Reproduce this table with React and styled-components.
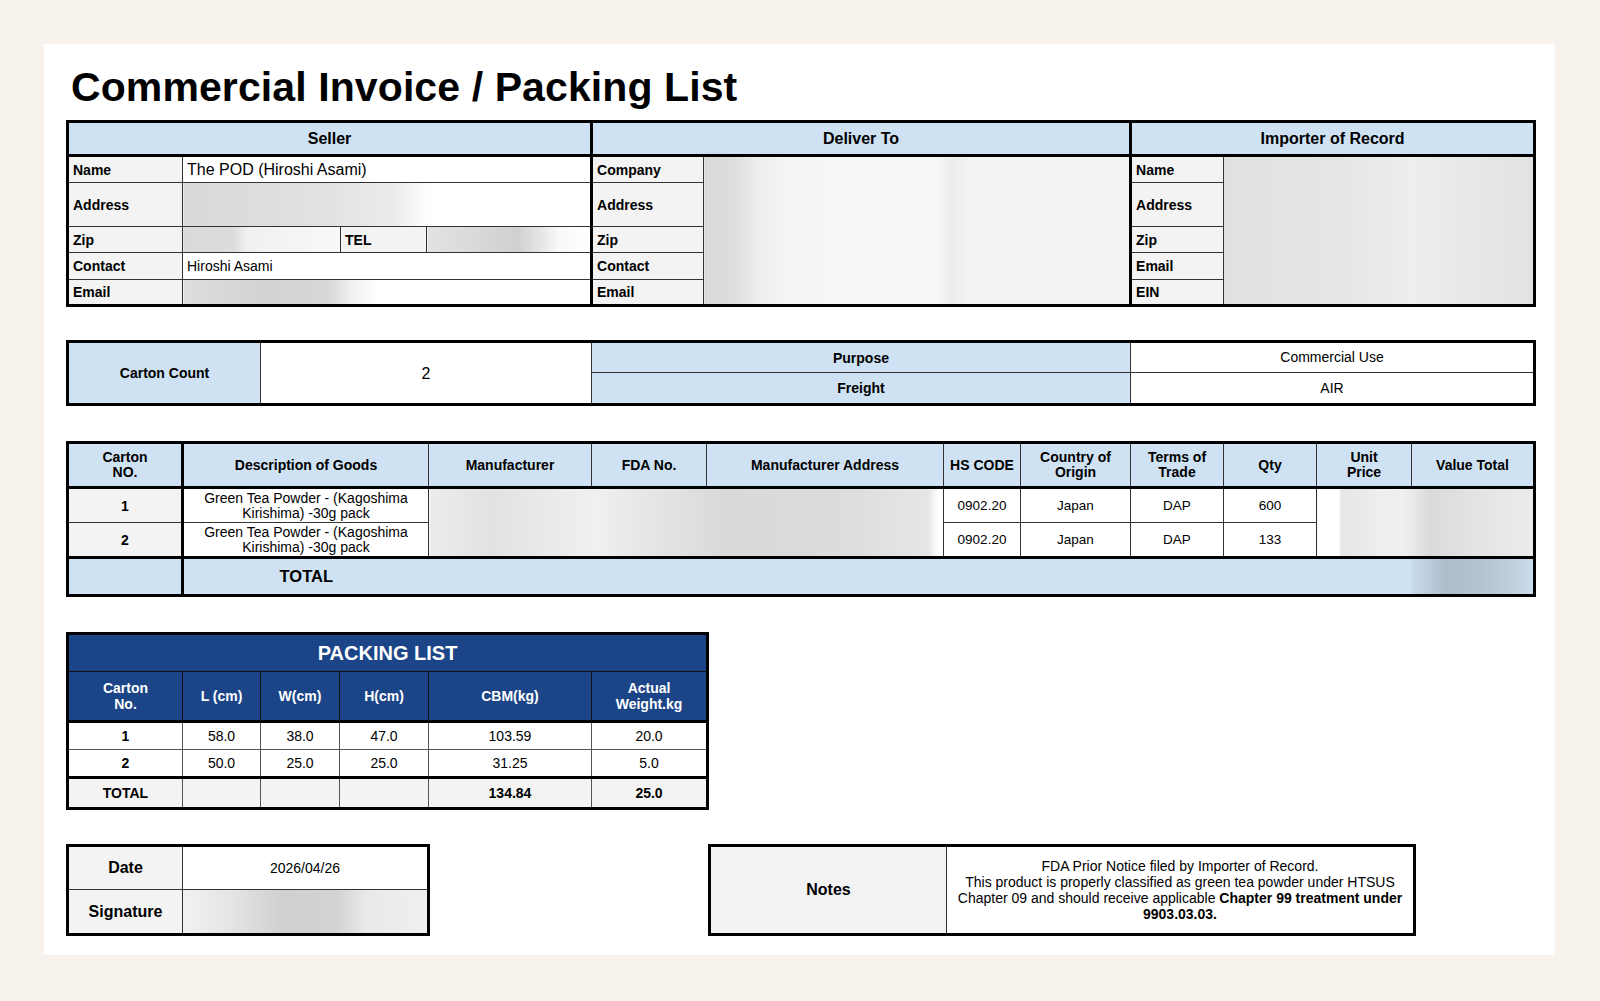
import React from 'react'
import styled, { createGlobalStyle, css } from 'styled-components'

const GlobalStyle = createGlobalStyle`
  body {
    margin: 0;
    background: #f7f3ec;
    font-family: "Liberation Sans", Arial, Helvetica, sans-serif;
    color: #000;
  }
`

// redacted areas of the original sheet
const BLUR = {
  sellerAddress: 'linear-gradient(90deg, #d9d9d9 0%, #dddddd 18%, #e2e2e2 36%, #ececec 52%, #fafafa 58%, #fff 62%)',
  sellerZip: 'linear-gradient(90deg, #dadada 0%, #dcdcdc 32%, #f0f0f0 40%, #f8f8f8 100%)',
  sellerTel: 'linear-gradient(90deg, #e2e2e2 0%, #d9d9d9 30%, #d0d0d0 55%, #e6e6e6 70%, #f8f8f8 80%, #fff 100%)',
  sellerEmail: 'linear-gradient(90deg, #dedede 0%, #d2d2d2 20%, #d8d8d8 36%, #f3f3f3 42%, #fff 48%)',
  deliver: 'linear-gradient(90deg, #d8d8d8 0%, #dedede 7%, #eeeeee 13%, #f5f5f5 20%, #f7f7f7 55%, #ebebeb 58%, #f3f3f3 62%, #f2f2f2 100%)',
  importer: 'linear-gradient(90deg, #e0e0e0 0%, #e6e6e6 40%, #eeeeee 60%, #e8e8e8 80%, #e2e2e2 100%)',
  goods: 'linear-gradient(90deg, #ececec 0%, #e2e2e2 12%, #f0f0f0 32%, #e6e6e6 42%, #d9d9d9 58%, #dcdcdc 80%, #e6e6e6 97%, #fff 99%)',
  price: 'linear-gradient(90deg, #fff 0%, #fff 10%, #e6e6e6 11%, #eeeeee 30%, #f0f0f0 40%, #dadada 52%, #e4e4e4 75%, #ececec 100%)',
  total: 'linear-gradient(90deg, #c9dbeb 0%, #acbccb 28%, #b4c3d1 55%, #bccbd9 75%, #cadbeb 100%)',
  signature: 'linear-gradient(90deg, #f1f1f1 0%, #e4e4e4 20%, #d0d0d0 40%, #d2d2d2 62%, #e9e9e9 75%, #f0f0f0 100%)',
}

const Page = styled.div`
  padding: 44px 45px 45px 44px;
`

const Sheet = styled.div`
  width: 1511px;
  height: 911px;
  box-sizing: border-box;
  background: #fff;
  padding: 23px 0 0 22px;
`

const Title = styled.h1`
  margin: 0 0 12px 5px;
  font-size: 41px;
  line-height: 41px;
  font-weight: 700;
  letter-spacing: 0.1px;
`

const Body = styled.div`
  display: flex;
  flex-direction: column;
  gap: 33px;
`

const BottomRow = styled.div`
  display: flex;
  align-items: flex-start;
  gap: 278px;
  margin-top: 1px;
`

const Table = styled.table`
  border-collapse: collapse;
  table-layout: fixed;
  width: ${p => p.$w}px;
  margin-top: ${p => p.$mt || 0}px;
  border: 3px solid #000;
`

const Row = styled.tr`
  height: ${p => p.$h}px;
`

const edges = css`
  ${p => p.$tl && 'border-left: 3px solid #000;'}
  ${p => p.$tr && 'border-right: 3px solid #000;'}
  ${p => p.$tt && 'border-top: 3px solid #000;'}
  ${p => p.$tb && 'border-bottom: 3px solid #000;'}
  ${p => p.$open && 'border-left: none; border-right: none;'}
`

const HeadCell = styled.th`
  background: #cfe2f3;
  border: 1px solid #333;
  font-size: ${p => p.$size || 14}px;
  line-height: 15px;
  font-weight: 700;
  text-align: center;
  padding: 0 4px;
  ${edges}
`

const LabelCell = styled.td`
  background: ${p => p.$blue ? '#cfe2f3' : '#f3f3f3'};
  border: 1px solid #333;
  font-size: ${p => p.$size || 14}px;
  font-weight: 700;
  text-align: ${p => p.$align || 'left'};
  padding: 0 4px;
  white-space: nowrap;
  ${edges}
`

const DataCell = styled.td`
  background: ${p => p.$blur || (p.$blue ? '#cfe2f3' : '#fff')};
  border: 1px solid #333;
  font-size: ${p => p.$size || 13.5}px;
  line-height: ${p => p.$lh || 15}px;
  font-weight: ${p => p.$bold ? 700 : 400};
  text-align: ${p => p.$align || 'center'};
  padding: 0 4px;
  ${edges}
`

const PackTitle = styled.th`
  background: #1c4587;
  color: #fff;
  border: 1px solid #111;
  font-size: 20px;
  font-weight: 700;
  text-align: center;
`

const PackHead = styled.th`
  background: #1c4587;
  color: #fff;
  border: 1px solid #111;
  border-bottom: 3px solid #000;
  font-size: 14px;
  line-height: 16px;
  font-weight: 700;
  text-align: center;
`

const PackCell = styled.td`
  background: ${p => p.$total ? '#f3f3f3' : '#fff'};
  border: 1px solid #555;
  ${p => p.$total && 'border-top: 3px solid #000;'}
  font-size: 14px;
  font-weight: ${p => p.$bold ? 700 : 400};
  text-align: center;
`

const NoteText = styled.td`
  background: #fff;
  border: 1px solid #333;
  font-size: 14px;
  line-height: 16px;
  text-align: center;
  padding: 0 6px;
  white-space: nowrap;
`

const Strong = styled.b`
  font-weight: 700;
`

const Cols = ({ widths }) => (
  <colgroup>
    {widths.map((w, i) => <col key={i} style={{ width: w }} />)}
  </colgroup>
)

const goodsHeads = [
  ['Carton', 'NO.'], ['Description of Goods'], ['Manufacturer'], ['FDA No.'],
  ['Manufacturer Address'], ['HS CODE'], ['Country of', 'Origin'], ['Terms of', 'Trade'],
  ['Qty'], ['Unit', 'Price'], ['Value Total'],
]

const goods = [
  { no: 1, qty: 600 },
  { no: 2, qty: 133 },
]

const packing = [
  ['1', '58.0', '38.0', '47.0', '103.59', '20.0'],
  ['2', '50.0', '25.0', '25.0', '31.25', '5.0'],
]

function PartiesTable() {
  return (
    <Table $w={1467}>
      <Cols widths={[115, 158, 86, 165, 112, 427, 93, 311]} />
      <tbody>
        <Row $h={34}>
          <HeadCell colSpan={4} $size={16} $tr $tb>Seller</HeadCell>
          <HeadCell colSpan={2} $size={16} $tr $tb>Deliver To</HeadCell>
          <HeadCell colSpan={2} $size={16} $tb>Importer of Record</HeadCell>
        </Row>
        <Row $h={27}>
          <LabelCell>Name</LabelCell>
          <DataCell colSpan={3} $size={16} $align="left" $tr>The POD (Hiroshi Asami)</DataCell>
          <LabelCell>Company</LabelCell>
          <DataCell rowSpan={5} $blur={BLUR.deliver} $tr />
          <LabelCell>Name</LabelCell>
          <DataCell rowSpan={5} $blur={BLUR.importer} />
        </Row>
        <Row $h={44}>
          <LabelCell>Address</LabelCell>
          <DataCell colSpan={3} $blur={BLUR.sellerAddress} $tr />
          <LabelCell>Address</LabelCell>
          <LabelCell>Address</LabelCell>
        </Row>
        <Row $h={26}>
          <LabelCell>Zip</LabelCell>
          <DataCell $blur={BLUR.sellerZip} />
          <LabelCell>TEL</LabelCell>
          <DataCell $blur={BLUR.sellerTel} $tr />
          <LabelCell>Zip</LabelCell>
          <LabelCell>Zip</LabelCell>
        </Row>
        <Row $h={27}>
          <LabelCell>Contact</LabelCell>
          <DataCell colSpan={3} $size={14} $align="left" $tr>Hiroshi Asami</DataCell>
          <LabelCell>Contact</LabelCell>
          <LabelCell>Email</LabelCell>
        </Row>
        <Row $h={26}>
          <LabelCell>Email</LabelCell>
          <DataCell colSpan={3} $blur={BLUR.sellerEmail} $tr />
          <LabelCell>Email</LabelCell>
          <LabelCell>EIN</LabelCell>
        </Row>
      </tbody>
    </Table>
  )
}

function ShipmentTable() {
  return (
    <Table $w={1467}>
      <Cols widths={[193, 331, 539, 404]} />
      <tbody>
        <Row $h={31}>
          <LabelCell rowSpan={2} $blue $align="center">Carton Count</LabelCell>
          <DataCell rowSpan={2} $size={16}>2</DataCell>
          <LabelCell $blue $align="center">Purpose</LabelCell>
          <DataCell $size={14}>Commercial Use</DataCell>
        </Row>
        <Row $h={32}>
          <LabelCell $blue $align="center">Freight</LabelCell>
          <DataCell $size={14}>AIR</DataCell>
        </Row>
      </tbody>
    </Table>
  )
}

function GoodsTable() {
  return (
    <Table $w={1467} $mt={2}>
      <Cols widths={[115, 246, 163, 115, 237, 77, 110, 93, 93, 95, 123]} />
      <tbody>
        <Row $h={45}>
          {goodsHeads.map((lines, i) => (
            <HeadCell key={i} $tr={i === 0} $tb>
              {lines.map((l, j) => <React.Fragment key={j}>{j > 0 && <br />}{l}</React.Fragment>)}
            </HeadCell>
          ))}
        </Row>
        {goods.map((g, i) => (
          <Row key={g.no} $h={35}>
            <LabelCell $align="center" $tr>{g.no}</LabelCell>
            <DataCell $size={14}>Green Tea Powder - (Kagoshima Kirishima) -30g pack</DataCell>
            {i === 0 && <DataCell colSpan={3} rowSpan={2} $blur={BLUR.goods} />}
            <DataCell>0902.20</DataCell>
            <DataCell>Japan</DataCell>
            <DataCell>DAP</DataCell>
            <DataCell>{g.qty}</DataCell>
            {i === 0 && <DataCell colSpan={2} rowSpan={2} $blur={BLUR.price} />}
          </Row>
        ))}
        <Row $h={38}>
          <DataCell $blue $tr $tt />
          <DataCell $blue $bold $size={16.5} $tt $open>TOTAL</DataCell>
          <DataCell colSpan={8} $blue $tt $open />
          <DataCell $blur={BLUR.total} $tt $open />
        </Row>
      </tbody>
    </Table>
  )
}

function PackingTable() {
  return (
    <Table $w={640} $mt={2}>
      <Cols widths={[115, 78, 79, 89, 163, 116]} />
      <tbody>
        <Row $h={38}>
          <PackTitle colSpan={6}>PACKING LIST</PackTitle>
        </Row>
        <Row $h={50}>
          <PackHead>Carton<br />No.</PackHead>
          <PackHead>L (cm)</PackHead>
          <PackHead>W(cm)</PackHead>
          <PackHead>H(cm)</PackHead>
          <PackHead>CBM(kg)</PackHead>
          <PackHead>Actual<br />Weight.kg</PackHead>
        </Row>
        {packing.map(r => (
          <Row key={r[0]} $h={28}>
            {r.map((v, j) => <PackCell key={j} $bold={j === 0}>{v}</PackCell>)}
          </Row>
        ))}
        <Row $h={31}>
          <PackCell $total $bold>TOTAL</PackCell>
          <PackCell $total />
          <PackCell $total />
          <PackCell $total />
          <PackCell $total $bold>134.84</PackCell>
          <PackCell $total $bold>25.0</PackCell>
        </Row>
      </tbody>
    </Table>
  )
}

function SignTable() {
  return (
    <Table $w={361}>
      <Cols widths={[115, 246]} />
      <tbody>
        <Row $h={44}>
          <LabelCell $size={16} $align="center">Date</LabelCell>
          <DataCell $size={14}>2026/04/26</DataCell>
        </Row>
        <Row $h={45}>
          <LabelCell $size={16} $align="center">Signature</LabelCell>
          <DataCell $blur={BLUR.signature} />
        </Row>
      </tbody>
    </Table>
  )
}

function NotesTable() {
  return (
    <Table $w={705}>
      <Cols widths={[237, 468]} />
      <tbody>
        <Row $h={89}>
          <LabelCell $size={16} $align="center">Notes</LabelCell>
          <NoteText>
            FDA Prior Notice filed by Importer of Record.<br />
            This product is properly classified as green tea powder under HTSUS<br />
            Chapter 09 and should receive applicable <Strong>Chapter 99 treatment under</Strong><br />
            <Strong>9903.03.03.</Strong>
          </NoteText>
        </Row>
      </tbody>
    </Table>
  )
}

export default function App() {
  return (
    <>
      <GlobalStyle />
      <Page>
        <Sheet>
          <Title>Commercial Invoice / Packing List</Title>
          <Body>
            <PartiesTable />
            <ShipmentTable />
            <GoodsTable />
            <PackingTable />
            <BottomRow>
              <SignTable />
              <NotesTable />
            </BottomRow>
          </Body>
        </Sheet>
      </Page>
    </>
  )
}
